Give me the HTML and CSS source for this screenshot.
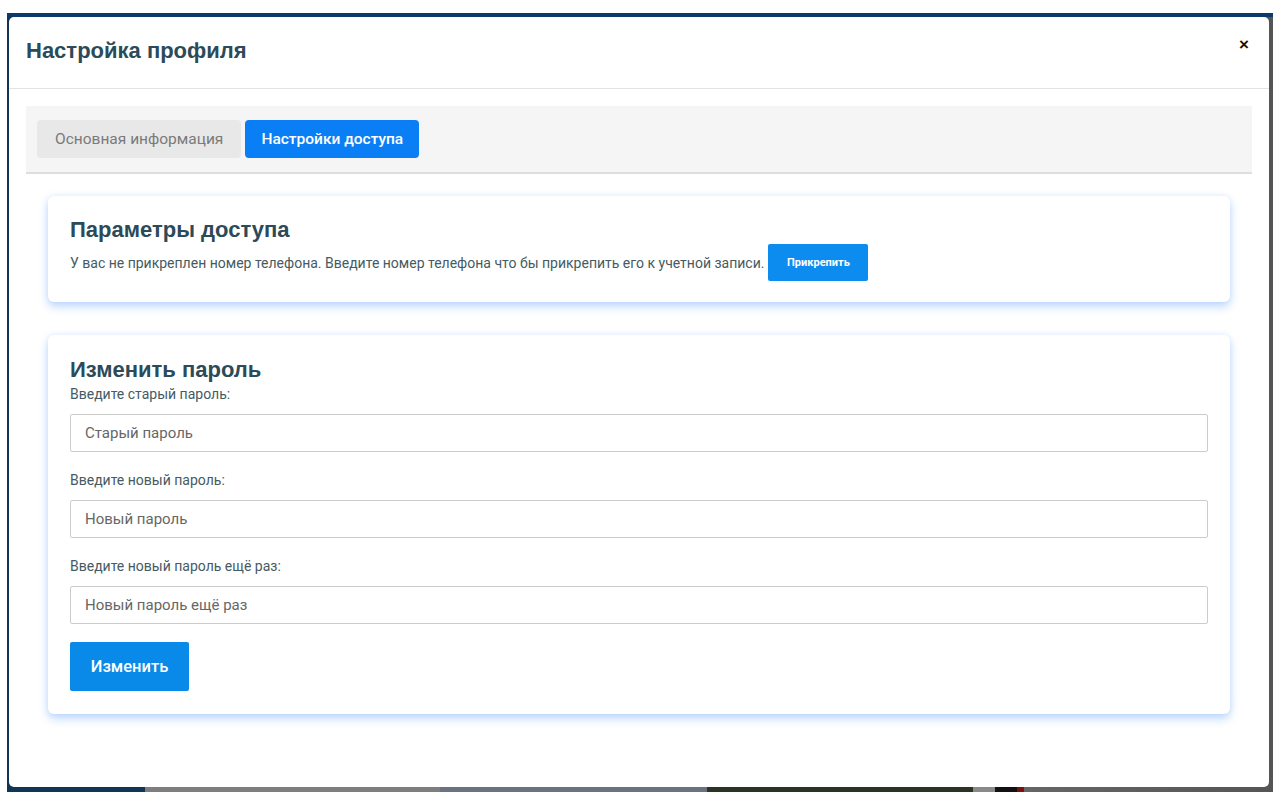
FILE: index.html
```html
<!DOCTYPE html>
<html lang="ru">
<head>
<meta charset="utf-8">
<title>Настройка профиля</title>
<link rel="stylesheet" href="styles.css">
</head>
<body>
<div class="page">
  <div class="backdrop">
    <div class="modal">
      <div class="modal-header">
        <h1 class="modal-title">Настройка профиля</h1>
        <button class="close" type="button">×</button>
      </div>
      <div class="modal-body">
        <div class="tabs">
          <button class="tab" type="button">Основная информация</button>
          <button class="tab tab-active" type="button">Настройки доступа</button>
        </div>
        <div class="content">
          <section class="card card-access">
            <h2 class="card-title">Параметры доступа</h2>
            <p class="card-text">У вас не прикреплен номер телефона. Введите номер телефона что бы прикрепить его к учетной записи. <button class="btn-small" type="button">Прикрепить</button></p>
          </section>
          <section class="card card-password">
            <h2 class="card-title">Изменить пароль</h2>
            <label class="field-label">Введите старый пароль:</label>
            <input class="field" type="password" placeholder="Старый пароль">
            <label class="field-label">Введите новый пароль:</label>
            <input class="field" type="password" placeholder="Новый пароль">
            <label class="field-label">Введите новый пароль ещё раз:</label>
            <input class="field" type="password" placeholder="Новый пароль ещё раз">
            <button class="btn-primary" type="button">Изменить</button>
          </section>
        </div>
      </div>
    </div>
  </div>
</div>
</body>
</html>
```
FILE: styles.css
```css
* { box-sizing: border-box; }
html, body { margin: 0; padding: 0; background: #ffffff; }
body { font-family: Roboto, "Liberation Sans", Arial, sans-serif; }

.page {
  width: 1280px;
  height: 800px;
  padding: 13px 7px 8px 7px;
}

.backdrop {
  height: 779px;
  border-top: 4px solid #0c3a6c;
  padding: 0 4px 5px 2px;
  background: linear-gradient(to right,
    #123456 0, #123456 138px,
    #7e7e7e 138px, #7e7e7e 433px,
    #6b7280 433px, #6b7280 700px,
    #2b3324 700px, #2b3324 966px,
    #8a8a8a 966px, #8a8a8a 988px,
    #111111 988px, #111111 1010px,
    #7a1010 1010px, #7a1010 1017px,
    #666666 1017px, #555555 100%);
}

.modal {
  height: 100%;
  background: #ffffff;
  border-radius: 5px;
  display: flex;
  flex-direction: column;
}

.modal-header {
  height: 72px;
  border-bottom: 1px solid #e3e3e3;
  display: flex;
  align-items: center;
  justify-content: space-between;
  padding: 0 20px 3px 17px;
}

.modal-title {
  margin: 0;
  font-family: "Liberation Sans", Arial, sans-serif;
  font-size: 22px;
  font-weight: bold;
  color: #2c4a58;
}

.close {
  border: 0;
  background: none;
  padding: 0;
  font-family: "Liberation Sans", Arial, sans-serif;
  font-size: 17px;
  font-weight: bold;
  color: #111;
  line-height: 1;
  margin-top: -14px;
}

.modal-body {
  padding: 17px 17px 0 17px;
}

.tabs {
  background: #f5f5f5;
  border-bottom: 2px solid #dedede;
  padding: 14px 11px 14px 11px;
  display: flex;
  gap: 4px;
  height: 68px;
}

.tab {
  height: 38px;
  border: 0;
  border-radius: 4px;
  background: #e8e8e8;
  color: #7a7a7a;
  font-family: Roboto, "Liberation Sans", Arial, sans-serif;
  font-size: 15.5px;
  padding: 0 18px;
}

.tab-active {
  background: #0a7ff5;
  color: #ffffff;
  font-weight: 500;
  padding: 0 16px;
}

.content {
  padding: 22px 22px 0 22px;
  display: flex;
  flex-direction: column;
  gap: 33px;
}

.card {
  background: #ffffff;
  border-radius: 6px;
  box-shadow: 0 0 6px rgba(40, 120, 255, 0.12), 0 5px 10px rgba(40, 130, 255, 0.28);
}

.card-access {
  padding: 22px 22px 21px 22px;
}

.card-title {
  margin: 0 0 2px 0;
  font-family: "Liberation Sans", Arial, sans-serif;
  font-weight: bold;
  font-size: 22px;
  line-height: 24px;
  color: #2c4a58;
}

.card-password .card-title {
  line-height: 26px;
}

.card-text {
  margin: 0;
  font-size: 14px;
  color: #465a62;
  display: flex;
  align-items: center;
  gap: 4px;
}

.btn-small {
  height: 37px;
  width: 100px;
  border: 0;
  border-radius: 2px;
  background: #0c8cee;
  color: #ffffff;
  font-family: Roboto, "Liberation Sans", Arial, sans-serif;
  font-size: 11px;
  font-weight: bold;
  padding: 0;
}

.card-password {
  padding: 22px 22px 23px 22px;
  display: flex;
  flex-direction: column;
  align-items: flex-start;
}

.field-label {
  font-size: 14px;
  line-height: 18px;
  color: #465a62;
}

.field {
  width: 100%;
  height: 38px;
  border: 1px solid #cccccc;
  border-radius: 2px;
  padding: 0 14px;
  font-family: Roboto, "Liberation Sans", Arial, sans-serif;
  font-size: 15px;
  color: #333;
  margin: 11px 0 19px 0;
}

.field:last-of-type { margin-bottom: 18px; }

.field::placeholder { color: #666666; }

.btn-primary {
  margin-top: 0;
  height: 49px;
  width: 119px;
  border: 0;
  border-radius: 2px;
  background: #0a8ae8;
  color: #ffffff;
  font-family: Roboto, "Liberation Sans", Arial, sans-serif;
  font-size: 16.5px;
  font-weight: 500;
}
```
